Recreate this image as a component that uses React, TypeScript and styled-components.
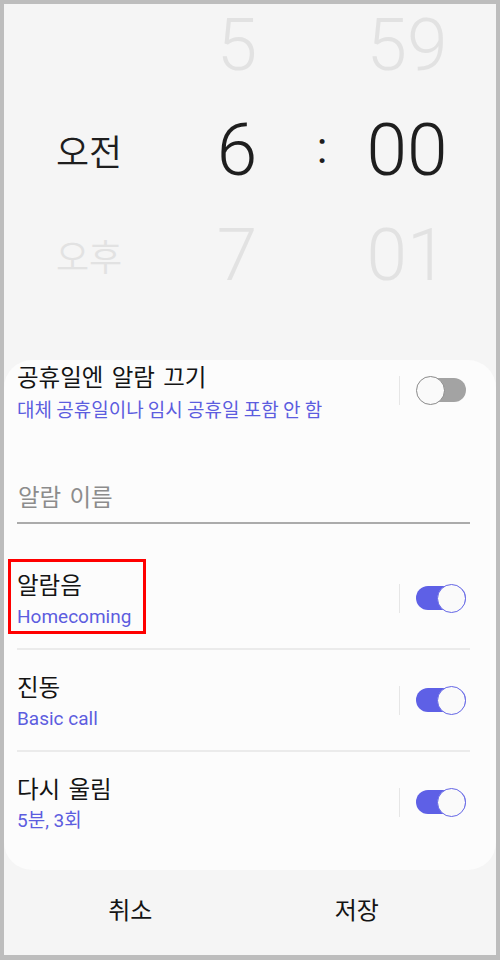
import React from "react";
import styled, { createGlobalStyle, css } from "styled-components";

const GlobalStyle = createGlobalStyle`
  html, body { margin: 0; padding: 0; background: #bdbdbd; }
  * { box-sizing: border-box; }
  body { font-family: "Noto Sans CJK KR", "Noto Sans", Roboto, sans-serif; }
`;

const KR = `"Noto Sans CJK KR", "Noto Sans", sans-serif`;
const BLUE = "#5c5ddf";

const Frame = styled.div`
  width: 500px;
  height: 960px;
  border: 4px solid #bdbdbd;
  border-bottom-width: 5px;
  background: #f5f5f5;
  display: flex;
  flex-direction: column;
  overflow: hidden;
`;

const Picker = styled.div`
  height: 356px;
  display: grid;
  grid-template-columns: 170px 126px 44px 126px 1fr;
  grid-template-rows: 82px 82px 82px;
  row-gap: 23px;
  align-items: center;
  justify-items: center;
`;

const Digit = styled.div<{ $active?: boolean }>`
  font-family: Roboto, "Liberation Sans", sans-serif;
  font-weight: 300;
  font-size: 73px;
  line-height: 1;
  color: ${(p) => (p.$active ? "#1e1e1e" : "#e2e2e2")};
`;

const Colon = styled.div`
  font-family: Roboto, "Liberation Sans", sans-serif;
  font-weight: 400;
  font-size: 44px;
  line-height: 1;
  color: #1e1e1e;
  margin-top: -4px;
`;

const Meridiem = styled.div<{ $active?: boolean }>`
  font-family: ${KR};
  font-weight: 350;
  font-size: 36px;
  line-height: 1;
  color: ${(p) => (p.$active ? "#1e1e1e" : "#e2e2e2")};
`;

const Card = styled.div`
  height: 510px;
  background: #fcfcfc;
  border-radius: 28px;
  padding: 0 26px 0 13px;
  display: flex;
  flex-direction: column;
`;

const Row = styled.div<{ $h: number; $divider?: boolean }>`
  position: relative;
  height: ${(p) => p.$h}px;
  display: flex;
  align-items: center;
  ${(p) =>
    p.$divider &&
    css`
      border-bottom: 2px solid #ebebeb;
      height: ${p.$h + 2}px;
    `}
`;

const TextBlock = styled.div`
  flex: 1;
  display: flex;
  flex-direction: column;
  gap: 6px;
`;

const Title = styled.div`
  font-family: ${KR};
  font-size: 23.5px;
  line-height: 31px;
  word-spacing: 3px;
  color: #141414;
  font-weight: 400;
`;

const Sub = styled.div<{ $latin?: boolean }>`
  font-family: ${(p) => (p.$latin ? `Roboto, ${KR}` : KR)};
  font-size: 19px;
  line-height: 22px;
  color: ${BLUE};
`;

const Highlight = styled.div`
  position: absolute;
  left: -9px;
  top: 11px;
  width: 138px;
  height: 75px;
  border: 3px solid #ff0000;
  pointer-events: none;
`;

const Sep = styled.div`
  width: 1px;
  height: 29px;
  background: #e6e6e6;
  margin-right: 16px;
`;

const Track = styled.div<{ $on: boolean }>`
  position: relative;
  width: 50px;
  height: 29px;
  flex: none;
  margin-right: 4px;
  &::before {
    content: "";
    position: absolute;
    left: ${(p) => (p.$on ? 0 : 4)}px;
    right: 0;
    top: 2.5px;
    height: 24px;
    border-radius: 12px;
    background: ${(p) => (p.$on ? "#5e60e6" : "#a3a3a3")};
  }
`;

const Thumb = styled.div<{ $on: boolean }>`
  position: absolute;
  top: 0;
  ${(p) => (p.$on ? "right: 0;" : "left: 0;")}
  width: 29px;
  height: 29px;
  border-radius: 50%;
  background: #fafafa;
  border: 1.5px solid ${(p) => (p.$on ? "#6466e6" : "#8a8a8a")};
`;

const NameField = styled.div`
  margin-top: 61px;
  padding: 0 0 10px 1px;
  border-bottom: 2px solid #ababab;
  font-family: ${KR};
  font-size: 23.5px;
  line-height: 31px;
  word-spacing: 3px;
  color: #8c8c8c;
`;

const BottomBar = styled.div`
  flex: 1;
  display: flex;
  padding: 0 26px 8px 13px;
`;

const BarButton = styled.div`
  flex: 1;
  display: flex;
  align-items: center;
  justify-content: center;
  font-family: ${KR};
  font-size: 24px;
  color: #141414;
`;

const Toggle = ({ on }: { on: boolean }) => (
  <>
    <Sep />
    <Track $on={on}>
      <Thumb $on={on} />
    </Track>
  </>
);

export default function App() {
  return (
    <>
      <GlobalStyle />
      <Frame>
        <Picker>
          <span />
          <Digit>5</Digit>
          <span />
          <Digit>59</Digit>
          <span />

          <Meridiem $active>오전</Meridiem>
          <Digit $active>6</Digit>
          <Colon>:</Colon>
          <Digit $active>00</Digit>
          <span />

          <Meridiem>오후</Meridiem>
          <Digit>7</Digit>
          <span />
          <Digit>01</Digit>
          <span />
        </Picker>

        <Card>
          <Row $h={60}>
            <TextBlock>
              <Title>공휴일엔 알람 끄기</Title>
              <Sub>대체 공휴일이나 임시 공휴일 포함 안 함</Sub>
            </TextBlock>
            <Toggle on={false} />
          </Row>

          <NameField>알람 이름</NameField>

          <Row $h={100} $divider style={{ marginTop: 24 }}>
            <Highlight />
            <TextBlock>
              <Title>알람음</Title>
              <Sub $latin>Homecoming</Sub>
            </TextBlock>
            <Toggle on />
          </Row>

          <Row $h={100} $divider>
            <TextBlock>
              <Title>진동</Title>
              <Sub $latin>Basic call</Sub>
            </TextBlock>
            <Toggle on />
          </Row>

          <Row $h={100}>
            <TextBlock>
              <Title>다시 울림</Title>
              <Sub $latin>5분, 3회</Sub>
            </TextBlock>
            <Toggle on />
          </Row>
        </Card>

        <BottomBar>
          <BarButton>취소</BarButton>
          <BarButton>저장</BarButton>
        </BottomBar>
      </Frame>
    </>
  );
}
